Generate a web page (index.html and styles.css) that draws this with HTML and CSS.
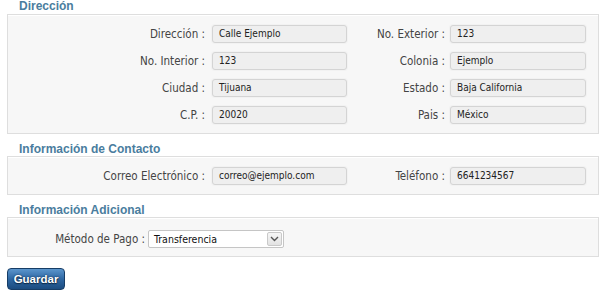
FILE: index.html
```html
<!DOCTYPE html>
<html lang="es">
<head>
<meta charset="utf-8">
<title>Formulario</title>
<link rel="stylesheet" href="styles.css">
</head>
<body>
<div class="page">
  <section class="group first">
    <div class="legend">Dirección</div>
    <div class="box grid">
      <label class="lbl">Dirección :</label><div class="field">Calle Ejemplo</div>
      <label class="lbl lbl2">No. Exterior :</label><div class="field">123</div>
      <label class="lbl">No. Interior :</label><div class="field">123</div>
      <label class="lbl lbl2">Colonia :</label><div class="field">Ejemplo</div>
      <label class="lbl">Ciudad :</label><div class="field">Tijuana</div>
      <label class="lbl lbl2">Estado :</label><div class="field">Baja California</div>
      <label class="lbl">C.P. :</label><div class="field">20020</div>
      <label class="lbl lbl2">Pais :</label><div class="field">México</div>
    </div>
  </section>
  <section class="group">
    <div class="legend">Información de Contacto</div>
    <div class="box grid">
      <label class="lbl">Correo Electrónico :</label><div class="field">correo@ejemplo.com</div>
      <label class="lbl lbl2">Teléfono :</label><div class="field">6641234567</div>
    </div>
  </section>
  <section class="group">
    <div class="legend">Información Adicional</div>
    <div class="box row">
      <label class="lbl lbl3">Método de Pago :</label>
      <div class="select"><span class="sel-text">Transferencia</span><span class="sel-btn"><svg width="9" height="6" viewBox="0 0 9 6"><path d="M1 1 L4.5 4.5 L8 1" fill="none" stroke="#555" stroke-width="1.4"/></svg></span></div>
    </div>
  </section>
  <button class="btn" type="button">Guardar</button>
</div>
</body>
</html>
```
FILE: styles.css
```css
* { box-sizing: border-box; }
html, body { margin: 0; padding: 0; background: #fff; }
body { font-family: "DejaVu Sans Condensed", "DejaVu Sans", sans-serif; font-size: 12px; color: #555; }
.page { padding: 0 1px 0 7px; }
.group { margin-bottom: 9px; }
.group.first .legend { height: 14px; }
.legend {
  height: 13px;
  line-height: 13px;
  padding-left: 12px;
  font-family: "Liberation Sans", Arial, sans-serif;
  font-weight: bold;
  font-size: 12px;
  color: #4a7d9e;
}
.box {
  background: #f7f7f7;
  border: 1px solid #dedede;
  box-shadow: inset 0 1px 0 #fff;
  padding: 10px 0 9px 0;
}
.grid {
  display: grid;
  grid-template-columns: 204px 135px 103px 136px;
  row-gap: 9px;
  align-items: center;
}
.lbl {
  text-align: right;
  padding-right: 7px;
  font-size: 11.5px;
  color: #444;
  white-space: nowrap;
  line-height: 18px;
}
.lbl2 { padding-right: 5px; }
.field {
  height: 18px;
  line-height: 16px;
  background: #efefef;
  border: 1px solid #d4d4d4;
  border-radius: 3px;
  box-shadow: 0 0 0 1px #f2f2f2;
  padding-left: 6px;
  font-size: 10px;
  color: #222;
  white-space: nowrap;
  overflow: hidden;
}
.row { display: flex; align-items: center; padding: 12px 0 8px 0; }
.lbl3 { width: 140px; padding-right: 3px; }
.select {
  width: 136px;
  height: 18px;
  background: #fff;
  border: 1px solid #c5c5c5;
  border-radius: 2px;
  display: flex;
  align-items: center;
  justify-content: space-between;
  padding: 0 1px 0 5px;
}
.sel-text { font-size: 10.5px; color: #111; }
.sel-btn {
  width: 15px;
  height: 14px;
  border: 1px solid #c9c9c9;
  background: linear-gradient(#f6f6f6, #e2e2e2);
  border-radius: 2px;
  display: flex;
  align-items: center;
  justify-content: center;
}
.btn {
  display: block;
  margin-top: 11px;
  width: 58px;
  height: 22px;
  border: 1px solid #173d66;
  border-radius: 4px;
  background: linear-gradient(#5b95cc 0%, #2e67a3 50%, #1b4c80 100%);
  color: #fff;
  font-family: "Liberation Sans", Arial, sans-serif;
  font-weight: bold;
  font-size: 11.5px;
  text-shadow: 0 1px 1px #0c2947, 0 0 2px #0c2947;
  padding: 0;
}
```
